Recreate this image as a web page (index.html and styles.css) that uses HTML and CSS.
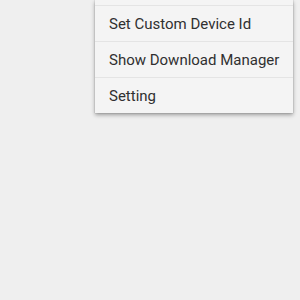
FILE: index.html
```html
<!DOCTYPE html>
<html>
<head>
<meta charset="utf-8">
<link rel="stylesheet" href="styles.css">
</head>
<body>
<div class="screen">
  <ul class="menu">
    <li class="item item-clipped"></li>
    <li class="item">Set Custom Device Id</li>
    <li class="item">Show Download Manager</li>
    <li class="item">Setting</li>
  </ul>
</div>
</body>
</html>
```
FILE: styles.css
```css
html, body {
  margin: 0;
  padding: 0;
  background: #efefef;
}
.screen {
  width: 300px;
  height: 300px;
  overflow: hidden;
  display: flex;
  justify-content: flex-end;
  align-items: flex-start;
  padding-right: 7px;
  box-sizing: border-box;
}
.menu {
  list-style: none;
  margin: 0;
  padding: 0;
  width: 198px;
  background: #f4f4f4;
  box-shadow: 0 2px 4px rgba(0,0,0,0.35), 0 0 1px rgba(0,0,0,0.3);
  font-family: Roboto, "Liberation Sans", sans-serif;
  font-size: 15px;
  color: #303030;
}
.item {
  height: 35px;
  display: flex;
  align-items: center;
  padding-left: 14px;
  border-bottom: 1px solid #e4e4e4;
}
.item-clipped {
  height: 5px;
}
.item:last-child {
  border-bottom: none;
}
```
